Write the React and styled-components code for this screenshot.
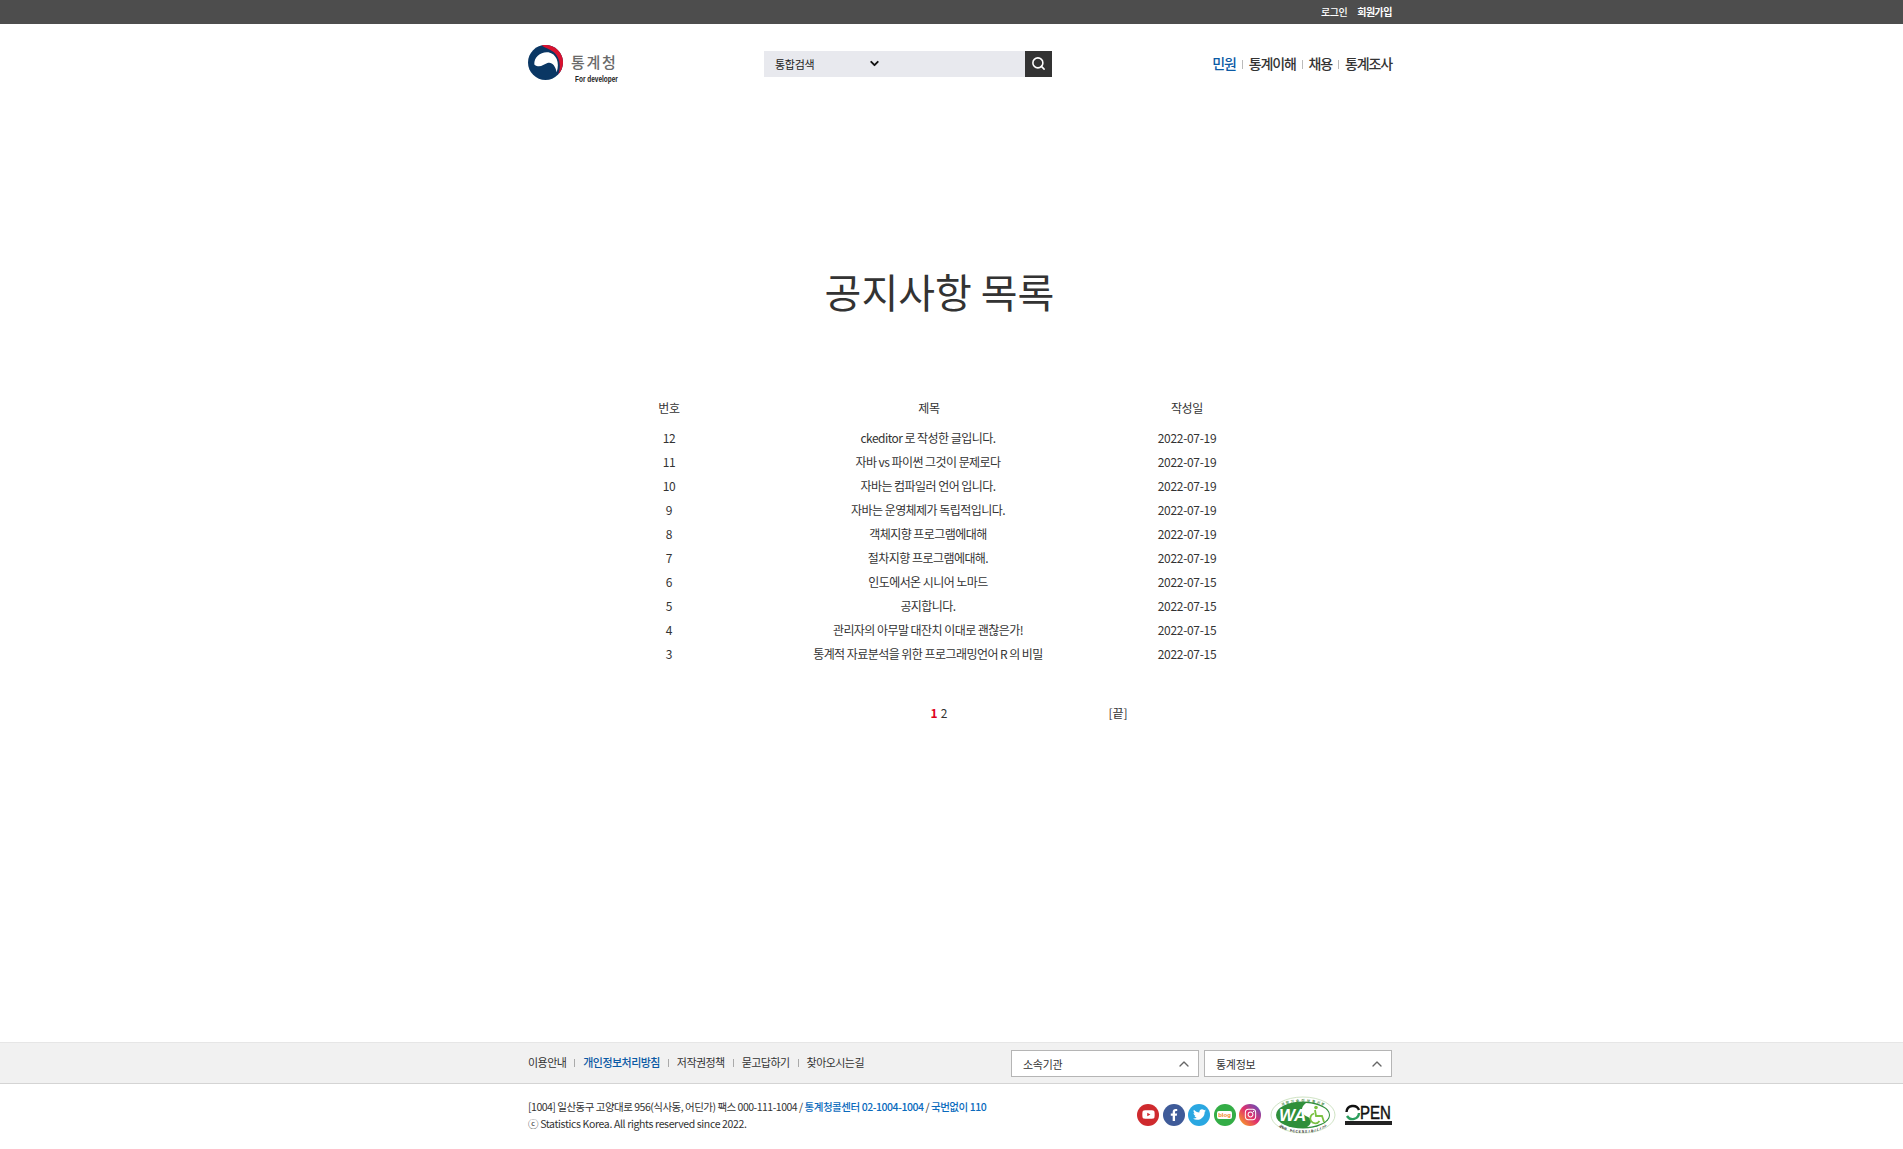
import React from "react";
import styled, { createGlobalStyle } from "styled-components";
import { Search, ChevronDown, ChevronUp } from "lucide-react";
import { FaYoutube, FaFacebookF, FaTwitter, FaInstagram } from "react-icons/fa";

const GlobalStyle = createGlobalStyle`
  html, body {
    margin: 0;
    padding: 0;
    background: #fff;
    color: #333;
    font-family: "Noto Sans CJK KR", "Noto Sans", sans-serif;
  }
  ul { margin: 0; padding: 0; list-style: none; }
`;

const Page = styled.div`
  display: flex;
  flex-direction: column;
  min-height: 100vh;
`;

const Inner = styled.div`
  width: 864px;
  margin-left: 528px;
  display: flex;
  align-items: center;
`;

const TopBar = styled.div`
  height: 24px;
  background: #4d4d4d;
`;

const TopInner = styled(Inner)`
  height: 24px;
  justify-content: flex-end;
  gap: 10px;
`;

const TopLink = styled.a`
  color: #fff;
  font-size: 10px;
  font-weight: ${(p) => (p.$bold ? 700 : 500)};
  letter-spacing: -0.5px;
  line-height: 22px;
`;

const Header = styled(Inner)`
  height: 78px;
  position: relative;
  justify-content: flex-start;
`;

const Logo = styled.div`
  display: flex;
  gap: 8px;
  width: 236px;
  padding-top: 3px;
`;

const LogoText = styled.div`
  display: flex;
  flex-direction: column;
  padding-top: 8px;
`;

const LogoName = styled.span`
  font-size: 15px;
  line-height: 18px;
  color: #6a6a6a;
  font-weight: 500;
  letter-spacing: 1.7px;
`;

const LogoSub = styled.span`
  font-family: "Liberation Sans", sans-serif;
  font-size: 9px;
  line-height: 10px;
  font-weight: 700;
  color: #222;
  margin: 3px 0 0 4px;
  white-space: nowrap;
  transform: scaleX(0.72);
  transform-origin: left;
`;

const SearchBox = styled.div`
  display: flex;
  width: 288px;
  height: 26px;
  margin-top: 1px;
`;

const SearchField = styled.div`
  flex: 1;
  display: flex;
  align-items: center;
  background: #e8e9ee;
  padding-left: 11px;
  font-size: 11px;
  color: #222;
  letter-spacing: -0.3px;
`;

const SearchScope = styled.span`
  width: 93px;
`;

const SearchButton = styled.button`
  width: 27px;
  border: 0;
  padding: 0;
  background: #333;
  color: #fff;
  display: flex;
  align-items: center;
  justify-content: center;
`;

const Nav = styled.ul`
  position: absolute;
  right: 0;
  top: 29px;
  display: flex;
  align-items: center;
`;

const NavItem = styled.li`
  font-size: 14px;
  line-height: 20px;
  font-weight: 500;
  letter-spacing: -1.15px;
  color: ${(p) => (p.$active ? "#0b5aa5" : "#333")};
  &:not(:first-child)::before {
    content: "";
    display: inline-block;
    width: 1px;
    height: 9px;
    background: #bbb;
    margin: 0 6px;
  }
`;

const Main = styled.main`
  flex: 1;
`;

const Title = styled.h1`
  margin: 0;
  padding: 163px 24px 0 0;
  text-align: center;
  font-size: 40px;
  line-height: 52px;
  font-weight: 400;
  color: #333;
`;

const Board = styled.table`
  width: 616px;
  margin: 78px 0 0 619px;
  border-collapse: collapse;
  table-layout: fixed;
  font-size: 12px;
  color: #333;
  letter-spacing: -0.3px;
`;

const HeadCell = styled.th`
  height: 24px;
  padding: 0 0 6px;
  font-weight: 400;
  text-align: center;
`;

const Cell = styled.td`
  height: 24px;
  padding: ${(p) => (p.$tight ? "0 2px 0 0" : "0")};
  text-align: center;
  white-space: nowrap;
  letter-spacing: ${(p) => (p.$tight ? "-0.55px" : "inherit")};
`;

const Pager = styled.div`
  display: grid;
  grid-template-columns: 150px 208px;
  margin: 38px 0 0 864px;
  font-size: 12px;
  line-height: 20px;
  text-align: center;
`;

const PageNo = styled.a`
  margin: 0 1.5px;
  font-weight: ${(p) => (p.$current ? 700 : 400)};
  color: ${(p) => (p.$current ? "#e0001b" : "#333")};
`;

const Footer = styled.footer`
  height: 107px;
`;

const FooterBar = styled.div`
  height: 40px;
  background: #f1f1f1;
  border-top: 1px solid #e6e6e6;
  border-bottom: 1px solid #d4d4d4;
`;

const FooterBarInner = styled(Inner)`
  height: 40px;
  justify-content: space-between;
`;

const FooterLinks = styled.ul`
  display: flex;
  align-items: center;
  margin-top: -2px;
`;

const FooterLink = styled.li`
  font-size: 11px;
  letter-spacing: -0.55px;
  color: ${(p) => (p.$strong ? "#0b5aa5" : "#333")};
  font-weight: ${(p) => (p.$strong ? 500 : 400)};
  &:not(:first-child)::before {
    content: "";
    display: inline-block;
    width: 1px;
    height: 8px;
    background: #aaa;
    margin: 0 8px;
  }
`;

const Selects = styled.div`
  display: flex;
  gap: 5px;
  margin-top: 1px;
`;

const SiteSelect = styled.div`
  box-sizing: border-box;
  width: 188px;
  height: 27px;
  background: #fff;
  border: 1px solid #b5b5b5;
  display: flex;
  align-items: center;
  justify-content: space-between;
  padding: 0 6px 0 11px;
  font-size: 11px;
  letter-spacing: -0.3px;
  color: #333;
`;

const FooterBottom = styled(Inner)`
  justify-content: space-between;
  height: 66px;
`;

const Address = styled.div`
  font-size: 10.5px;
  line-height: 17px;
  letter-spacing: -0.36px;
  color: #333;
  margin-top: -4px;
`;

const AddressLine = styled.div`
  letter-spacing: -0.5px;
`;

const Strong = styled.span`
  color: #0b6bbd;
  font-weight: 500;
  letter-spacing: -0.45px;
`;

const Badges = styled.div`
  display: flex;
  align-items: center;
  margin-top: -5px;
`;

const Socials = styled.div`
  display: flex;
  gap: 3.5px;
  margin-right: 9px;
`;

const Social = styled.a`
  width: 22px;
  height: 22px;
  border-radius: 50%;
  background: ${(p) => p.$bg};
  color: #fff;
  display: flex;
  align-items: center;
  justify-content: center;
  font-family: "Liberation Sans", sans-serif;
  font-size: 6px;
  font-weight: 700;
`;

const BlogTag = styled.span`
  background: #fff;
  color: #f08a24;
  border-radius: 2px;
  padding: 0 1.5px;
  line-height: 8px;
`;

const OpenBox = styled.div`
  margin: -6px 0 0 9px;
  width: 47px;
  height: 27px;
`;

const rows = [
  [12, "ckeditor 로 작성한 글입니다.", "2022-07-19"],
  [11, "자바 vs 파이썬 그것이 문제로다", "2022-07-19"],
  [10, "자바는 컴파일러 언어 입니다.", "2022-07-19"],
  [9, "자바는 운영체제가 독립적입니다.", "2022-07-19"],
  [8, "객체지향 프로그램에대해", "2022-07-19"],
  [7, "절차지향 프로그램에대해.", "2022-07-19"],
  [6, "인도에서온 시니어 노마드", "2022-07-15"],
  [5, "공지합니다.", "2022-07-15"],
  [4, "관리자의 아무말 대잔치 이대로 괜찮은가!", "2022-07-15"],
  [3, "통계적 자료분석을 위한 프로그래밍언어 R 의 비밀", "2022-07-15"],
];

const TaegeukMark = () => (
  <svg width="35" height="35" viewBox="0 0 36 36">
    <circle cx="18" cy="18" r="18" fill="#0a3764" />
    <path d="M6.5 20C6 12 13.5 6.5 21 7.5C29 9 33 18 29.5 28C28 21 24.5 17 20 18.5C15.5 20 12 24.5 6.5 20Z" fill="#fff" />
    <path d="M14 0.4A18 18 0 0 1 31 30.4C34.5 22 32.5 12 26 7C22 4 18 3 14 0.4Z" fill="#d8112f" />
  </svg>
);

// lays each letter of a label along an ellipse arc
const ArcText = ({ label, ry, from, to, cy, fill, font }) => {
  const letters = Array.from(label);
  return letters.map((letter, i) => {
    const angle = from + ((to - from) * i) / (letters.length - 1);
    const rad = (angle * Math.PI) / 180;
    const x = 33 + 29 * Math.sin(rad);
    const y = cy - ry * Math.cos(rad);
    return (
      <text
        key={i}
        x={x}
        y={y}
        fontFamily={font}
        fontSize="3.6"
        fontWeight="700"
        fill={fill}
        textAnchor="middle"
        transform={`rotate(${angle * 0.55} ${x} ${y})`}
      >
        {letter}
      </text>
    );
  });
};

const WaMark = () => (
  <svg width="66" height="38" viewBox="0 0 66 38">
    <ellipse cx="33" cy="19" rx="32" ry="18" fill="#fff" stroke="#cfe3c4" strokeWidth="1" />
    <ellipse cx="33" cy="19" rx="27" ry="13.5" fill="#2f8f3a" />
    <path d="M36 7C29 12 32 19 38 21C43 23 41 29 37 31C50 30 59 25 59 19C59 13 50 8 36 7Z" fill="#fff" />
    <text x="9" y="25" fontFamily="Liberation Sans" fontStyle="italic" fontWeight="700" fontSize="17" fill="#fff">WA</text>
    <circle cx="46" cy="11.5" r="1.8" fill="#7cc242" />
    <path d="M45 14L46 20L52 20L54 26M44 17.5A5 5 0 1 0 49.5 25" fill="none" stroke="#7cc242" strokeWidth="1.8" />
    <ArcText label="과학기술정보통신부" ry={13} from={-42} to={42} cy={19} fill="#4b8f4f" font="Noto Sans CJK KR" />
    <ArcText label="WEB ACCESSIBILITY" ry={-17} from={-48} to={48} cy={20} fill="#333" font="Liberation Sans" />
  </svg>
);

const OpenMark = () => (
  <svg width="47" height="27" viewBox="0 -6 47 27">
    <path d="M1.5 8A6.5 6.5 0 0 1 14 6" fill="none" stroke="#111" strokeWidth="2.4" />
    <path d="M1.5 9H14" fill="none" stroke="#fff" strokeWidth="1" />
    <path d="M14 9A6.5 6.5 0 0 1 2 12" fill="none" stroke="#2a9d5c" strokeWidth="2.4" />
    <text transform="translate(15 15) scale(1 1.2)" fontFamily="Liberation Sans" fontSize="15" stroke="#111" strokeWidth="0.4" fill="#111">PEN</text>
    <rect x="0" y="17" width="47" height="4" fill="#222" />
  </svg>
);

const App = () => (
  <Page>
    <GlobalStyle />
    <TopBar>
      <TopInner>
        <TopLink>로그인</TopLink>
        <TopLink $bold>회원가입</TopLink>
      </TopInner>
    </TopBar>
    <Header>
      <Logo>
        <TaegeukMark />
        <LogoText>
          <LogoName>통계청</LogoName>
          <LogoSub>For developer</LogoSub>
        </LogoText>
      </Logo>
      <SearchBox>
        <SearchField>
          <SearchScope>통합검색</SearchScope>
          <ChevronDown size={13} strokeWidth={3.5} color="#111" />
        </SearchField>
        <SearchButton>
          <Search size={15} strokeWidth={2.5} />
        </SearchButton>
      </SearchBox>
      <Nav>
        <NavItem $active>민원</NavItem>
        <NavItem>통계이해</NavItem>
        <NavItem>채용</NavItem>
        <NavItem>통계조사</NavItem>
      </Nav>
    </Header>
    <Main>
      <Title>공지사항 목록</Title>
      <Board>
        <colgroup>
          <col width="100" />
          <col width="420" />
          <col width="96" />
        </colgroup>
        <thead>
          <tr>
            <HeadCell>번호</HeadCell>
            <HeadCell>제목</HeadCell>
            <HeadCell>작성일</HeadCell>
          </tr>
        </thead>
        <tbody>
          {rows.map(([no, title, date]) => (
            <tr key={no}>
              <Cell>{no}</Cell>
              <Cell $tight>{title}</Cell>
              <Cell>{date}</Cell>
            </tr>
          ))}
        </tbody>
      </Board>
      <Pager>
        <div>
          <PageNo $current>1</PageNo>
          <PageNo>2</PageNo>
        </div>
        <div>[끝]</div>
      </Pager>
    </Main>
    <Footer>
      <FooterBar>
        <FooterBarInner>
          <FooterLinks>
            <FooterLink>이용안내</FooterLink>
            <FooterLink $strong>개인정보처리방침</FooterLink>
            <FooterLink>저작권정책</FooterLink>
            <FooterLink>묻고답하기</FooterLink>
            <FooterLink>찾아오시는길</FooterLink>
          </FooterLinks>
          <Selects>
            <SiteSelect>
              소속기관
              <ChevronUp size={16} strokeWidth={2} color="#666" />
            </SiteSelect>
            <SiteSelect>
              통계정보
              <ChevronUp size={16} strokeWidth={2} color="#666" />
            </SiteSelect>
          </Selects>
        </FooterBarInner>
      </FooterBar>
      <FooterBottom>
        <Address>
          <AddressLine>
            [1004] 일산동구 고양대로 956(식사동, 어딘가) 팩스 000-111-1004 /{" "}
            <Strong>통계청콜센터 02-1004-1004</Strong> / <Strong>국번없이 110</Strong>
          </AddressLine>
          <div>ⓒ Statistics Korea. All rights reserved since 2022.</div>
        </Address>
        <Badges>
          <Socials>
            <Social $bg="#cf2a2e">
              <FaYoutube size={13} />
            </Social>
            <Social $bg="#3f5b99">
              <FaFacebookF size={12} />
            </Social>
            <Social $bg="#2aa7e1">
              <FaTwitter size={13} />
            </Social>
            <Social $bg="#33ad46">
              <BlogTag>blog</BlogTag>
            </Social>
            <Social $bg="linear-gradient(45deg, #f9a423 5%, #e1306c 50%, #5b4fc0 95%)">
              <FaInstagram size={13} />
            </Social>
          </Socials>
          <WaMark />
          <OpenBox>
            <OpenMark />
          </OpenBox>
        </Badges>
      </FooterBottom>
    </Footer>
  </Page>
);

export default App;
